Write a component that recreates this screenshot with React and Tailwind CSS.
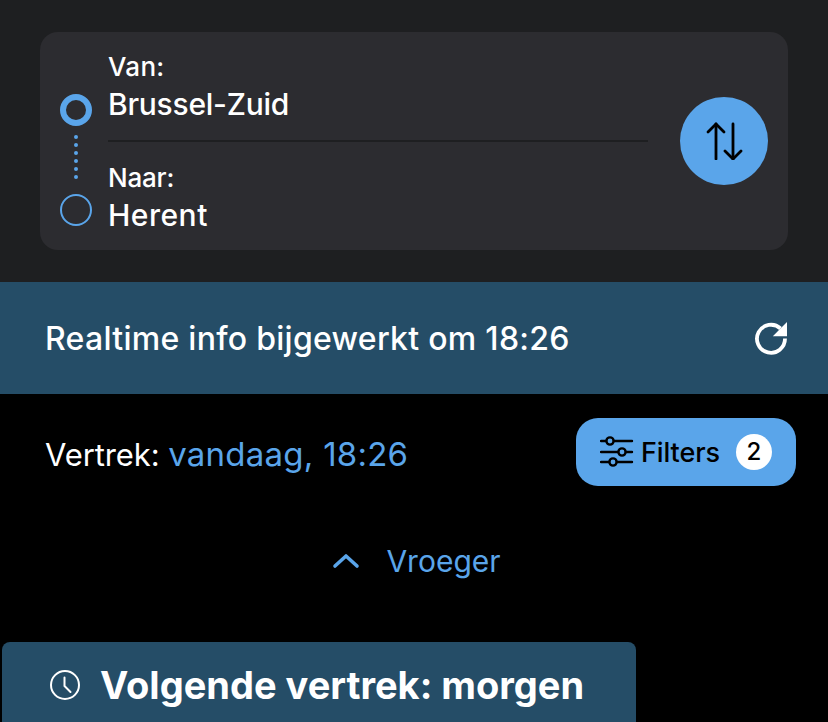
import React from "react";

const font = { fontFamily: '"Inter", "Liberation Sans", sans-serif' };

function Swap() {
  return (
    <svg width="38" height="38" viewBox="0 0 38 38" fill="none" stroke="#000" strokeWidth="2.8" strokeLinecap="round" strokeLinejoin="round">
      <path d="M11 37V2" />
      <path d="M3 10L11 2L19 10" />
      <path d="M28 2V37" />
      <path d="M20 29L28 37L36 29" />
    </svg>
  );
}

function Refresh() {
  return (
    <svg width="34" height="34" viewBox="0 0 34 34" fill="none">
      <path d="M26.5 7.5A14 14 0 1 0 31 17.5" stroke="#fff" strokeWidth="3.8" strokeLinecap="butt" />
      <path d="M33 1V15.2H18.8Z" fill="#fff" />
    </svg>
  );
}

function Sliders() {
  return (
    <svg width="34" height="34" viewBox="0 0 34 34" fill="none" stroke="#000" strokeWidth="2.4" strokeLinecap="round">
      <path d="M1 6H6M14 6H32" />
      <circle cx="10" cy="6" r="3.6" />
      <path d="M1 17H18M26 17H32" />
      <circle cx="22" cy="17" r="3.6" />
      <path d="M1 27H9M17 27H32" />
      <circle cx="13" cy="27" r="3.6" />
    </svg>
  );
}

function Clock() {
  return (
    <svg className="mt-[5px]" width="30" height="30" viewBox="0 0 30 30" fill="none" stroke="#fff" strokeWidth="2" strokeLinecap="round" strokeLinejoin="round">
      <circle cx="15" cy="15" r="14" />
      <path d="M14.5 7.5V16L20.5 22" />
    </svg>
  );
}

function Chevron() {
  return (
    <svg width="28" height="16" viewBox="0 0 28 16" fill="none" stroke="#5aa5ea" strokeWidth="3.6" strokeLinecap="round" strokeLinejoin="round">
      <path d="M3 13L14 3L25 13" />
    </svg>
  );
}

function Dots() {
  return (
    <svg width="4" height="52" viewBox="0 0 4 52" fill="none" stroke="#5aa5ea" strokeWidth="4" strokeLinecap="round" strokeDasharray="0 8">
      <path d="M2 2V50" />
    </svg>
  );
}

export default function App() {
  return (
    <div style={font} className="w-[828px] h-[722px] overflow-hidden bg-black flex flex-col">
      <div className="h-[282px] bg-[#1e1f21] px-10 pt-8 shrink-0">
        <div className="h-[218px] rounded-[18px] bg-[#2c2c30] flex items-center pl-5 pr-5">
          <div className="w-[32px] flex flex-col items-center shrink-0 self-start mt-[62px]">
            <div className="w-[32px] h-[32px] rounded-full border-[6px] border-[#5aa5ea]" />
            <div className="h-[68px] pt-[9px] pr-[1px]">
              <Dots />
            </div>
            <div className="w-[32px] h-[32px] rounded-full border-2 border-[#5aa5ea]" />
          </div>
          <div className="w-[540px] ml-4 flex flex-col text-white self-start pt-5">
            <div className="text-[26px] leading-[30px] font-medium tracking-[0.3px] mb-[2px]">Van:</div>
            <div className="text-[30px] leading-[40px] font-medium tracking-[-0.25px]">Brussel-Zuid</div>
            <div className="h-[2px] bg-[#1e1f21] mt-[16px] mb-[21px]" />
            <div className="text-[26px] leading-[30px] font-medium tracking-[-0.2px] mb-[2px]">Naar:</div>
            <div className="text-[30px] leading-[40px] font-medium tracking-[0.5px]">Herent</div>
          </div>
          <div className="ml-auto w-[88px] h-[88px] rounded-full bg-[#5aa5ea] flex items-center justify-center">
            <Swap />
          </div>
        </div>
      </div>

      <div className="h-[112px] bg-[#254d67] shrink-0 flex items-center justify-between pl-[45px] pr-[40px]">
        <span className="text-white text-[32px] leading-[40px] font-medium tracking-[0.28px] pt-[2px]">Realtime info bijgewerkt om 18:26</span>
        <Refresh />
      </div>

      <div className="flex items-center justify-between pl-[45px] pr-8 pt-6 shrink-0">
        <div className="text-[31px] leading-[40px] pt-[4px] tracking-[-0.1px]">
          <span className="text-white">Vertrek: </span>
          <span className="text-[#5aa5ea] text-[33px] tracking-[0.25px]">vandaag, 18:26</span>
        </div>
        <div className="w-[220px] h-[68px] rounded-[22px] bg-[#5aa5ea] flex items-center pl-6 text-black">
          <Sliders />
          <span className="ml-[7px] pt-[2px] text-[27px] font-medium tracking-[-0.1px]">Filters</span>
          <span className="ml-auto mr-6 w-9 h-9 rounded-full bg-white flex items-center justify-center text-[24px] font-medium">2</span>
        </div>
      </div>

      <div className="flex items-center justify-center gap-[26px] h-[40px] mt-[55px] shrink-0 pl-[5px]">
        <Chevron />
        <span className="text-[#5aa5ea] text-[30px]">Vroeger</span>
      </div>

      <div className="ml-[2px] mt-[61px] w-[634px] h-[90px] rounded-t-[8px] bg-[#254d67] flex items-start pl-[48px] pt-[23px] text-white shrink-0">
        <Clock />
        <span className="ml-5 text-[38px] leading-[40px] font-bold">Volgende vertrek: morgen</span>
      </div>
    </div>
  );
}
